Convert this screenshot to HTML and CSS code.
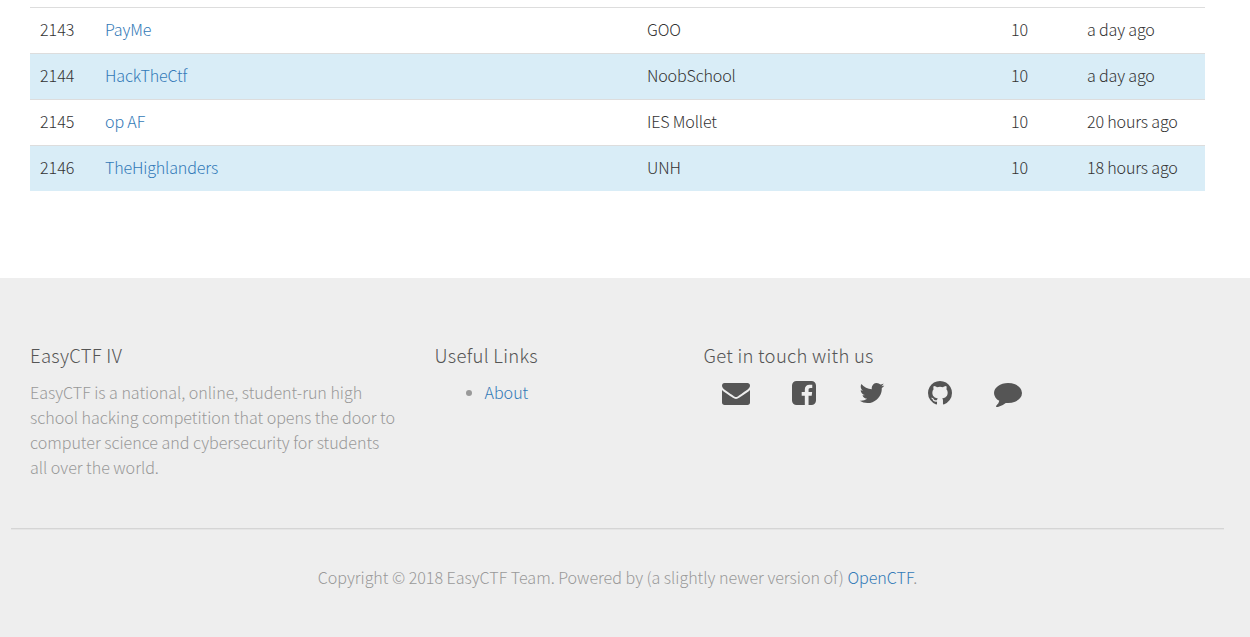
FILE: index.html
```html
<!DOCTYPE html>
<html lang="en">
<head>
<meta charset="utf-8">
<title>EasyCTF IV</title>
<link rel="stylesheet" href="styles.css">
</head>
<body>
<main class="content">
  <table class="scoreboard">
    <colgroup><col class="rank"><col class="team"><col class="school"><col class="points"><col class="time"></colgroup>
    <tbody>
      <tr><td>2143</td><td><a href="#">PayMe</a></td><td>GOO</td><td>10</td><td>a day ago</td></tr>
      <tr class="info"><td>2144</td><td><a href="#">HackTheCtf</a></td><td>NoobSchool</td><td>10</td><td>a day ago</td></tr>
      <tr><td>2145</td><td><a href="#">op AF</a></td><td>IES Mollet</td><td>10</td><td>20 hours ago</td></tr>
      <tr class="info"><td>2146</td><td><a href="#">TheHighlanders</a></td><td>UNH</td><td>10</td><td>18 hours ago</td></tr>
    </tbody>
  </table>
</main>
<footer class="footer">
  <div class="columns">
    <section class="about">
      <h4>EasyCTF IV</h4>
      <p>EasyCTF is a national, online, student-run high<br>school hacking competition that opens the door to<br>computer science and cybersecurity for students<br>all over the world.</p>
    </section>
    <section class="links">
      <h4>Useful Links</h4>
      <ul><li><a href="#">About</a></li></ul>
    </section>
    <section class="contact">
      <h4>Get in touch with us</h4>
      <div class="social">
        <a href="#" aria-label="Email"><svg viewBox="0 0 1792 1792"><path d="M1792 710v794q0 66-47 113t-113 47h-1472q-66 0-113-47t-47-113v-794q44 49 101 87 362 246 497 345 57 42 92.500 65.500t94.500 48 110 24.500h2q51 0 110-24.500t94.500-48 92.500-65.500q170-123 498-345 57-39 100-87zm0-294q0 79-49 151t-122 123q-376 261-468 325-10 7-42.500 31t-54 38.500-52 32.500-57.500 27-50 9h-2q-23 0-50-9t-57.500-27-52-32.500-54-38.500-42.500-31q-91-64-262-182.500t-205-142.500q-62-42-117-115.500t-55-136.500q0-78 41.500-130t118.500-52h1472q65 0 112.500 47t47.500 113z"/></svg></a>
        <a href="#" aria-label="Facebook"><svg viewBox="0 0 1792 1792"><path d="M1376 128q119 0 203.500 84.500t84.500 203.500v960q0 119-84.500 203.500t-203.500 84.500h-188v-595h199l30-232h-229v-148q0-56 23.500-84t91.500-28l122-1v-207q-63-9-178-9-136 0-217.500 80t-81.500 226v171h-200v232h200v595h-532q-119 0-203.500-84.500t-84.500-203.500v-960q0-119 84.500-203.500t203.500-84.500h960z"/></svg></a>
        <a href="#" aria-label="Twitter"><svg viewBox="0 0 1792 1792"><path d="M1684 408q-67 98-162 167 1 14 1 42 0 130-38 259.500t-115.500 248.500-184.500 210.500-258 146-323 54.500q-271 0-496-145 35 4 78 4 225 0 401-138-105-2-188-64.500t-114-159.500q33 5 61 5 43 0 85-11-112-23-185.500-111.500t-73.500-205.500v-4q68 38 146 41-66-44-105-115t-39-154q0-88 44-163 121 149 294.500 238.500t371.500 99.500q-8-38-8-74 0-134 94.500-228.500t228.500-94.500q140 0 236 102 109-21 205-78-37 115-142 178 93-10 186-50z"/></svg></a>
        <a href="#" aria-label="GitHub"><svg viewBox="0 0 1792 1792"><path d="M896 128q209 0 385.500 103t279.500 279.500 103 385.500q0 251-146.500 451.500t-378.500 277.500q-27 5-40-7t-13-30q0-3 .5-76.500t.5-134.500q0-97-52-142 57-6 102.500-18t94-39 81-66.500 53-105 20.500-150.500q0-119-79-206 37-91-8-204-28-9-81 11t-92 44l-38 24q-93-26-192-26t-192 26q-16-11-42.500-27t-83.500-38.500-85-13.500q-45 113-8 204-79 87-79 206 0 85 20.500 150t52.500 105 80.500 67 94 39 102.500 18q-39 36-49 103-21 10-45 15t-57 5-65.500-21.500-55.500-62.500q-19-32-48.500-52t-49.500-24l-20-3q-21 0-29 4.500t-5 11.500 9 14 13 12l7 5q22 10 43.500 38t31.500 51l10 23q13 38 44 61.500t67 30 69.500 7 55.500-3.500l23-4q0 38 .5 88.500t.5 54.500q0 18-13 30t-40 7q-232-77-378.500-277.500t-146.500-451.500q0-209 103-385.500t279.500-279.500 385.500-103z"/></svg></a>
        <a href="#" aria-label="Chat"><svg viewBox="0 0 1792 1792"><path d="M1792 896q0 174-120 321.500t-326 233-450 85.500q-70 0-145-8-198 175-460 242-49 14-114 22-17 2-30.500-9t-17.500-29v-1q-3-4-.5-12t2-10 4.500-9.500l6-9 7-8.500 8-9q7-8 31-34.500t34.500-38 31-39.500 32.500-51 27-59 26-76q-157-89-247.500-220t-90.500-281q0-130 71-248.500t191-204.500 286-136.500 348-50.500q244 0 450 85.500t326 233 120 321.500z"/></svg></a>
      </div>
    </section>
  </div>
  <hr>
  <p class="copyright">Copyright © 2018 EasyCTF Team. Powered by (a slightly newer version of) <a href="#">OpenCTF</a>.</p>
</footer>
</body>
</html>
```

FILE: styles.css
```css
* { box-sizing: border-box; }
body {
  margin: 0;
  background: #fff;
  color: #333;
  font: 300 16.1px/25px "Noto Sans CJK SC Light", "Noto Sans CJK SC", sans-serif;
}
a { color: #337ab7; text-decoration: none; }
.content { height: 278px; padding: 7px 45px 0 30px; }
.scoreboard { width: 1175px; table-layout: fixed; border-collapse: separate; border-spacing: 0; letter-spacing: -.17px; }
.scoreboard td { height: 46px; padding: 9px 10px 11px; border-top: 1px solid #ddd; white-space: nowrap; }
.scoreboard td:first-child, .scoreboard td:nth-child(4) { letter-spacing: 0; }
.rank { width: 65px; }
.team { width: 542px; }
.school { width: 364px; }
.points { width: 76px; }
.time { width: 128px; }
.info { background: #d9edf7; }
.footer { height: 359px; padding-top: 64px; background: #eee; color: #999; letter-spacing: -.03px; overflow: hidden; }
.columns { display: flex; height: 186px; padding-left: 30px; white-space: nowrap; }
.about { width: 404.5px; }
.links { width: 269px; }
h4 { margin: 0 0 12px; color: #555; font-size: 18.5px; font-weight: 300; line-height: 26px; letter-spacing: .28px; }
p { margin: 0; }
ul { margin: 0; padding-left: 50px; }
.social { display: flex; margin: -1.5px 0 0 -1.5px; }
.social a { display: flex; justify-content: center; width: 68px; color: #555; }
.social svg { width: 28px; height: 28px; fill: currentColor; }
hr { width: 1213px; height: 2px; margin: 0 0 0 11px; border: 0; border-top: 1px solid #d5d5d5; border-bottom: 1px solid #e5e5e5; }
.copyright { width: 1235px; padding-top: 35px; text-align: center; }
```
